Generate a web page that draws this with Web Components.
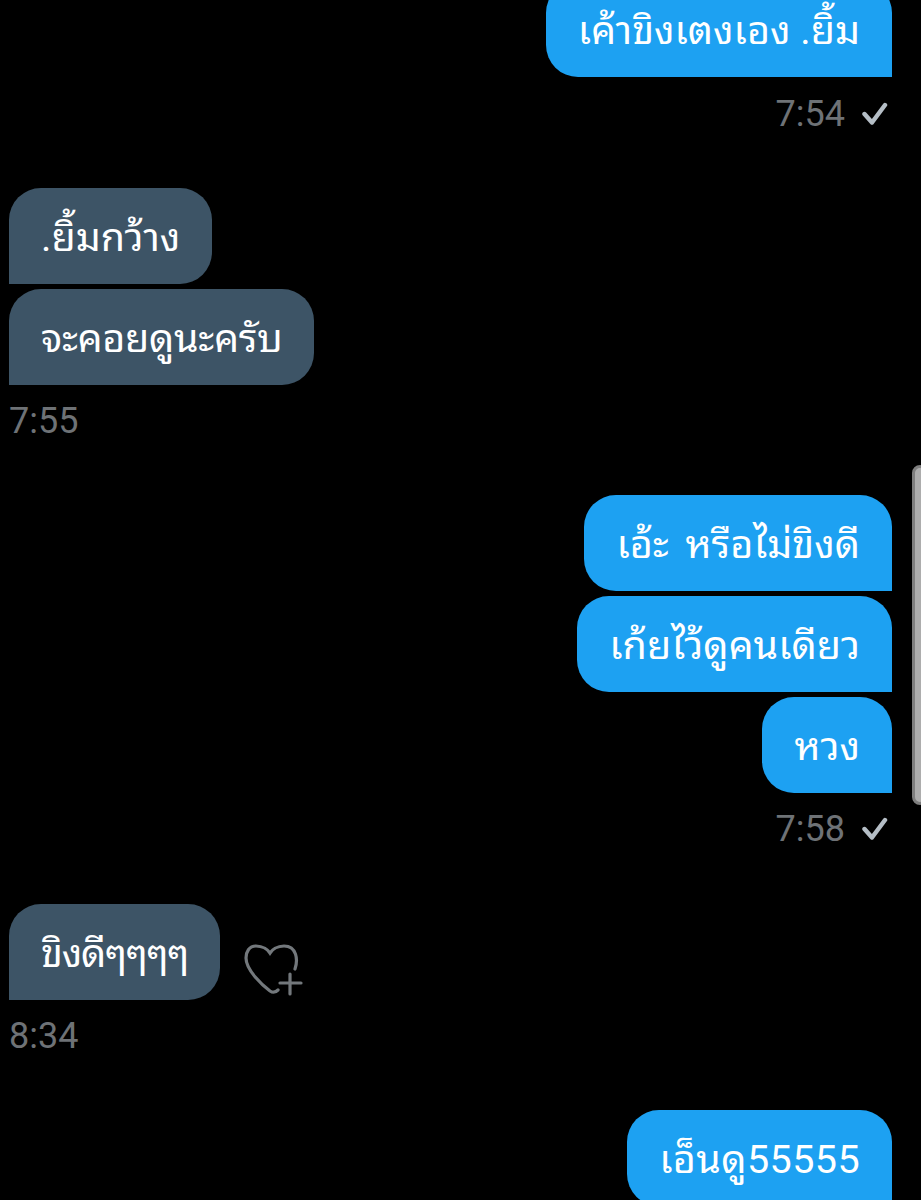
<!DOCTYPE html>
<html lang="th">
<head>
<meta charset="utf-8">
<title>chat</title>
<style>
  html, body { margin: 0; background: #000; }
  body { font-family: Roboto, "Noto Sans Thai Looped", sans-serif; height: 1200px; overflow: hidden; }
</style>
</head>
<body>
<dm-thread>
  <dm-group side="out" style="margin-top:-19px">
    <dm-bubble side="out">เค้าขิงเตงเอง .ยิ้ม</dm-bubble>
    <dm-time side="out" seen style="padding-top:3px">7:54</dm-time>
  </dm-group>
  <dm-group side="in" style="margin-top:39.5px">
    <dm-bubble side="in">.ยิ้มกว้าง</dm-bubble>
    <dm-bubble side="in" style="--track:-0.3px">จะคอยดูนะครับ</dm-bubble>
    <dm-time side="in">7:55</dm-time>
  </dm-group>
  <dm-group side="out" style="margin-top:38.5px">
    <dm-bubble side="out" style="--word:7px">เอ้ะ หรือไม่ขิงดี</dm-bubble>
    <dm-bubble side="out">เก้ยไว้ดูคนเดียว</dm-bubble>
    <dm-bubble side="out">หวง</dm-bubble>
    <dm-time side="out" seen>7:58</dm-time>
  </dm-group>
  <dm-group side="in" style="margin-top:39.5px">
    <dm-bubble side="in" like style="--track:-1.2px">ขิงดีๆๆๆๆ</dm-bubble>
    <dm-time side="in">8:34</dm-time>
  </dm-group>
  <dm-group side="out" style="margin-top:38.5px">
    <dm-bubble side="out" style="--track:0.4px">เอ็นดู55555</dm-bubble>
  </dm-group>
</dm-thread>
<dm-scrollbar></dm-scrollbar>

<script>
class DmThread extends HTMLElement {
  connectedCallback() {
    const root = this.attachShadow({ mode: 'open' });
    root.innerHTML = `
      <style>
        :host { display: flex; flex-direction: column; padding: 0 29px 0 9px; }
      </style>
      <slot></slot>`;
  }
}

class DmGroup extends HTMLElement {
  connectedCallback() {
    const root = this.attachShadow({ mode: 'open' });
    root.innerHTML = `
      <style>
        :host { display: flex; flex-direction: column; gap: 5.5px; }
        :host([side="out"]) { align-items: flex-end; }
        :host([side="in"]) { align-items: flex-start; }
      </style>
      <slot></slot>`;
  }
}

class DmBubble extends HTMLElement {
  connectedCallback() {
    const like = this.hasAttribute('like');
    const root = this.attachShadow({ mode: 'open' });
    root.innerHTML = `
      <style>
        :host { display: flex; align-items: center; }
        .bubble {
          box-sizing: border-box;
          height: 95.5px;
          display: flex;
          align-items: center;
          padding: 0 32px 5px;
          font-size: 39.5px;
          letter-spacing: var(--track, 0);
          word-spacing: var(--word, 0);
          color: #fff;
          white-space: nowrap;
        }
        :host([side="out"]) .bubble { background: #1da1f2; border-radius: 32px 32px 0 32px; }
        :host([side="in"]) .bubble { background: #3d5466; border-radius: 32px 32px 32px 0; }
        svg { margin: 24px 0 0 22px; }
      </style>
      <div class="bubble"><slot></slot></div>
      ${like ? `<svg width="62" height="68" viewBox="0 0 62 68" fill="none" stroke="#73787c" stroke-width="3.2" stroke-linecap="round">
        <path d="M53 39 C56 30 55 16 42 16 C35 16 30 20 28 23 C26 20 21 16 14 16 C7 16 4 22 4 28 C4 40 20 55 28 61 C31 63 34 62 36 60"/>
        <path d="M48 44 V64 M38 53 H59"/>
      </svg>` : ''}`;
  }
}

class DmTime extends HTMLElement {
  connectedCallback() {
    const seen = this.hasAttribute('seen');
    const root = this.attachShadow({ mode: 'open' });
    root.innerHTML = `
      <style>
        :host { box-sizing: border-box; display: flex; align-items: center; gap: 16px; height: 72px; margin-top: -5.5px; font-size: 36px; color: #6e7276; }
        :host([side="out"]) { padding-right: 4px; }
        :host([side="in"]) { padding-left: 0; }
        svg { display: block; }
      </style>
      <span><slot></slot></span>
      ${seen ? `<svg width="27" height="24" viewBox="0 0 27 24" fill="none" stroke="#b5bec6" stroke-width="4.4" stroke-linecap="round" stroke-linejoin="round">
        <path d="M3.5 12 L11 20.5 L24 3"/>
      </svg>` : ''}`;
  }
}

class DmScrollbar extends HTMLElement {
  connectedCallback() {
    const root = this.attachShadow({ mode: 'open' });
    root.innerHTML = `
      <style>
        :host {
          position: absolute;
          left: 912px;
          top: 465px;
          width: 16px;
          height: 340px;
          box-sizing: border-box;
          background: #adadad;
          border: 3px solid #7e7e7e;
          border-radius: 9px;
        }
      </style>`;
  }
}

customElements.define('dm-thread', DmThread);
customElements.define('dm-group', DmGroup);
customElements.define('dm-bubble', DmBubble);
customElements.define('dm-time', DmTime);
customElements.define('dm-scrollbar', DmScrollbar);
</script>
</body>
</html>
